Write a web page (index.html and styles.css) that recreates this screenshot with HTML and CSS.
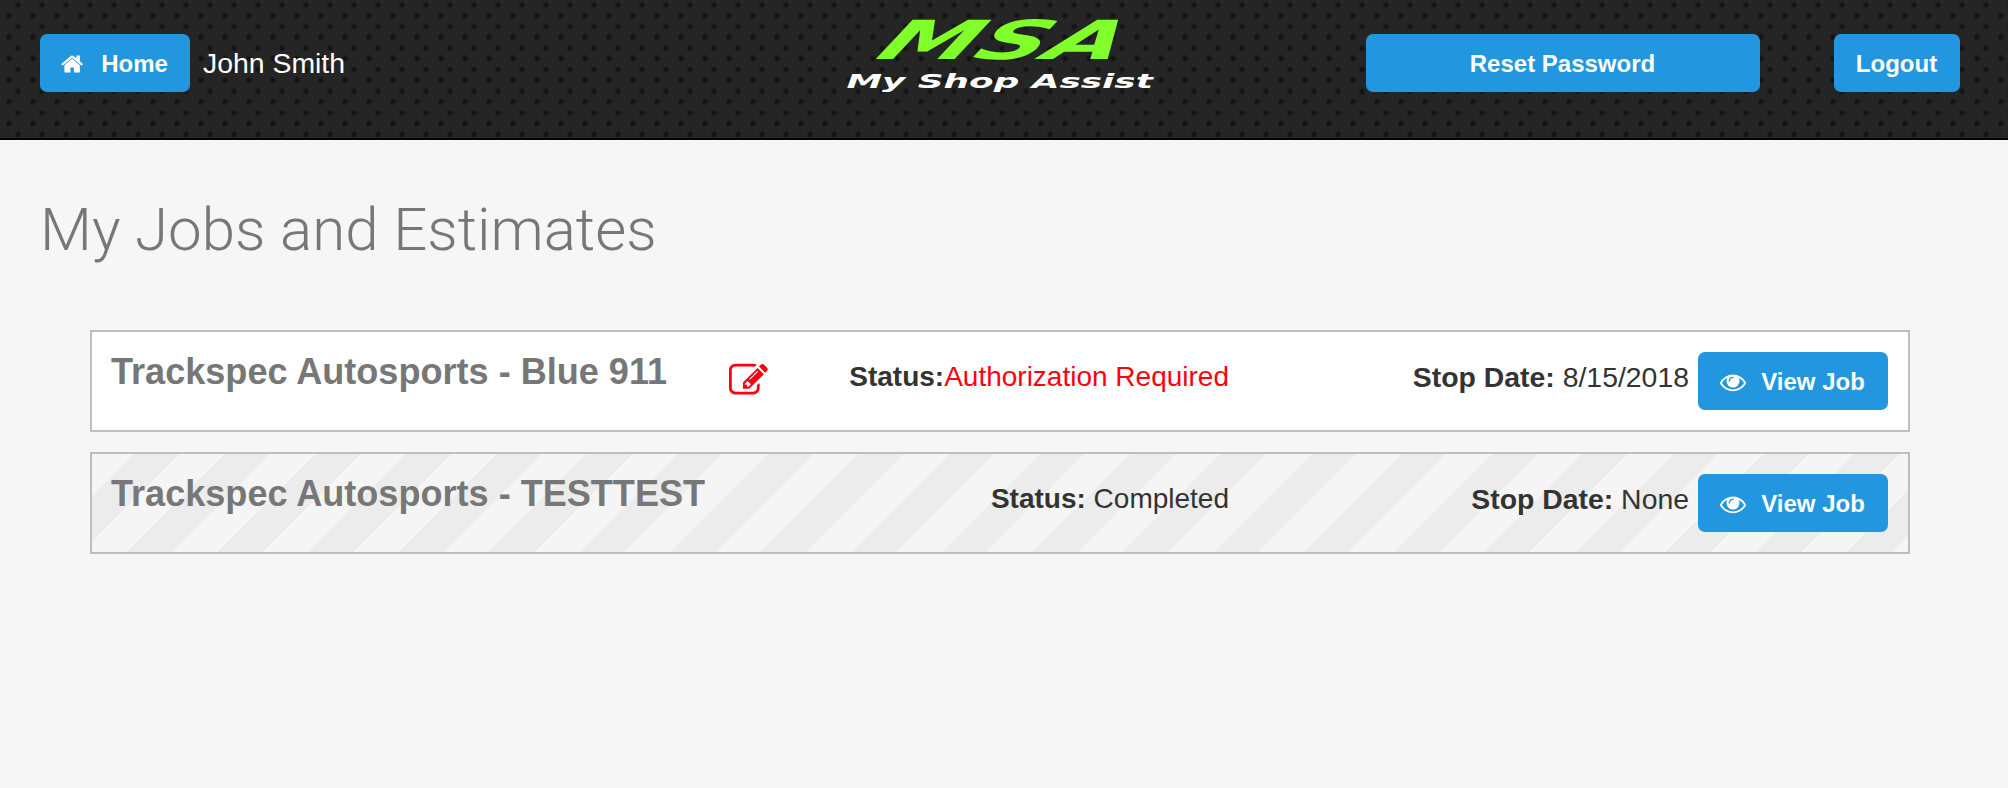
FILE: index.html
```html
<!DOCTYPE html>
<html lang="en">
<head>
<meta charset="utf-8">
<title>My Jobs and Estimates</title>
<link rel="stylesheet" href="styles.css">
</head>
<body>
<header class="topbar">
  <div class="topbar-left">
    <a class="btn" href="#"><svg class="icon icon-home" viewBox="0 0 1792 1792"><path d="M1408 992v480q0 26-19 45t-45 19h-384v-384h-256v384h-384q-26 0-45-19t-19-45v-480q0-1 .5-3t.5-3l575-474 575 474q1 2 1 6zm223-69l-62 74q-8 9-21 11h-3q-13 0-21-7l-692-577-692 577q-12 8-24 7-13-2-21-11l-62-74q-8-10-7-23.5t11-20.5l719-599q32-26 76-26t76 26l244 204v-195q0-14 9-23t23-9h192q14 0 23 9t9 23v408l219 182q10 8 11 21.5t-7 23.5z"/></svg>Home</a>
    <span class="user">John Smith</span>
  </div>
  <div class="logo">
    <span class="logo-mark">MSA</span>
    <span class="logo-name">My Shop Assist</span>
  </div>
  <div class="topbar-right">
    <a class="btn btn-reset" href="#">Reset Password</a>
    <a class="btn btn-logout" href="#">Logout</a>
  </div>
</header>
<main class="content">
  <h1 class="page-title">My Jobs and Estimates</h1>
  <section class="jobs">
    <article class="job">
      <h2 class="job-title">Trackspec Autosports - Blue 911</h2>
      <svg class="icon-edit" viewBox="0 0 1792 1792"><path d="M888 1184l116-116-152-152-116 116v56h96v96h56zm440-720q-16-16-33 1l-350 350q-17 17-1 33t33-1l350-350q17-17 1-33zm80 594v190q0 119-84.5 203.5t-203.5 84.5h-832q-119 0-203.5-84.5t-84.5-203.5v-832q0-119 84.5-203.5t203.5-84.5h832q63 0 117 25 15 7 18 23 3 17-9 29l-49 49q-14 14-32 8-23-6-45-6h-832q-66 0-113 47t-47 113v832q0 66 47 113t113 47h832q66 0 113-47t47-113v-126q0-13 9-22l64-64q15-15 35-7t20 29zm-96-738l288 288-672 672h-288v-288zm444 132l-92 92-288-288 92-92q28-28 68-28t68 28l152 152q28 28 28 68t-28 68z"/></svg>
      <p class="job-status"><b>Status:</b><span class="alert">Authorization Required</span></p>
      <p class="job-date"><b>Stop Date:</b> 8/15/2018</p>
      <a class="btn btn-view" href="#"><svg class="icon icon-eye" viewBox="0 0 1792 1792"><path d="M1664 960q-152-236-381-353 61 104 61 225 0 185-131.5 316.5t-316.5 131.5-316.5-131.5-131.5-316.5q0-121 61-225-229 117-381 353 133 205 333.5 326.5t434.5 121.5 434.5-121.5 333.5-326.5zm-720-384q0-20-14-34t-34-14q-125 0-214.5 89.5t-89.5 214.5q0 20 14 34t34 14 34-14 14-34q0-86 61-147t147-61q20 0 34-14t14-34zm848 384q0 34-20 69-140 230-376.5 368.5t-499.5 138.5-499.5-139-376.5-368q-20-35-20-69t20-69q140-229 376.5-368t499.5-139 499.5 139 376.5 368q20 35 20 69z"/></svg>View Job</a>
    </article>
    <article class="job job-done">
      <h2 class="job-title job-title-wide">Trackspec Autosports - TESTTEST</h2>
      <p class="job-status"><b>Status:</b> Completed</p>
      <p class="job-date"><b>Stop Date:</b> None</p>
      <a class="btn btn-view" href="#"><svg class="icon icon-eye" viewBox="0 0 1792 1792"><path d="M1664 960q-152-236-381-353 61 104 61 225 0 185-131.5 316.5t-316.5 131.5-316.5-131.5-131.5-316.5q0-121 61-225-229 117-381 353 133 205 333.5 326.5t434.5 121.5 434.5-121.5 333.5-326.5zm-720-384q0-20-14-34t-34-14q-125 0-214.5 89.5t-89.5 214.5q0 20 14 34t34 14 34-14 14-34q0-86 61-147t147-61q20 0 34-14t14-34zm848 384q0 34-20 69-140 230-376.5 368.5t-499.5 138.5-499.5-139-376.5-368q-20-35-20-69t20-69q140-229 376.5-368t499.5-139 499.5 139 376.5 368q20 35 20 69z"/></svg>View Job</a>
    </article>
  </section>
</main>
</body>
</html>
```

FILE: styles.css
```css
* { box-sizing: border-box; }
html, body { margin: 0; height: 100%; }
body {
  background: #f6f6f6;
  color: #333;
  font-family: "Liberation Sans", Arial, sans-serif;
  overflow: hidden;
}
.topbar {
  height: 140px;
  display: grid;
  grid-template-columns: 805px 310px 1fr;
  align-items: start;
  padding: 34px 48px 0 40px;
  border-bottom: 2px solid #000;
  background-color: #252525;
  background-image:
    radial-gradient(circle at 18px 5px, #121212 0, #141414 1.5px, rgba(20,20,20,0) 3.8px),
    radial-gradient(circle at 9px 15.5px, #121212 0, #141414 1.5px, rgba(20,20,20,0) 3.8px);
  background-size: 24px 21.6px;
}
.topbar-left { display: flex; align-items: center; gap: 13px; }
.topbar-right { display: flex; justify-content: flex-end; gap: 74px; }
.btn {
  height: 58px;
  display: inline-flex;
  align-items: center;
  justify-content: center;
  padding: 2px 1px 0 0;
  border-radius: 7px;
  background: #2296df;
  color: #fff;
  font-size: 24px;
  font-weight: 700;
  text-decoration: none;
  flex: none;
}
.topbar-left .btn { width: 150px; }
.btn-reset { width: 394px; }
.btn-logout { width: 126px; }
.btn-view { width: 190px; margin-top: 20px; }
.icon { fill: #fff; flex: none; }
.icon-home { width: 24px; height: 24px; margin-right: 16px; }
.icon-eye { width: 26px; height: 26px; margin-right: 15px; }
.user { color: #fff; font-size: 28.4px; }
.logo {
  display: flex;
  flex-direction: column;
  align-items: center;
  margin-top: -34px;
  height: 100px;
  font-family: "DejaVu Sans", sans-serif;
  font-style: italic;
  font-weight: 700;
}
.logo-mark {
  color: #80ff2a;
  font-size: 54px;
  line-height: 40px;
  margin: 21px 0 0 10px;
  transform: scaleX(1.8) skewX(-18deg);
}
.logo-name {
  color: #fff;
  font-size: 20px;
  line-height: 18px;
  margin-top: 11px;
  white-space: nowrap;
  transform: scaleX(1.79);
}
.content { padding: 0 98px 0 40px; }
.page-title {
  margin: 55px 0 0;
  color: #777;
  font-family: Roboto, sans-serif;
  font-size: 60px;
  font-weight: 300;
  line-height: 70px;
}
.jobs {
  display: flex;
  flex-direction: column;
  gap: 20px;
  margin: 65px 0 0 50px;
}
.job {
  height: 102px;
  display: grid;
  grid-template-columns: 604px 70px 444px 460px 1fr;
  padding: 0 20px 0 19px;
  border: 2px solid #c1bdb9;
  background: #fff;
}
.job-done {
  background: repeating-linear-gradient(135deg, #f5f5f5 0 30px, #ececec 30px 62px, #f5f5f5 62px 64px);
}
.job-title {
  margin: 20px 0 0;
  color: #777;
  font-size: 36.1px;
  font-weight: 700;
  line-height: 40px;
  white-space: nowrap;
}
.job-title-wide { grid-column: span 2; }
.icon-edit { width: 39px; height: 39px; margin: 29px 0 0 14px; fill: #f01; }
.job-status, .job-date {
  margin: 27px 0 0;
  font-size: 28px;
  line-height: 36px;
  text-align: right;
  color: #333;
}
.job-date { font-size: 28.4px; }
.alert { color: #f01; }
.btn-view { justify-self: end; }
```
